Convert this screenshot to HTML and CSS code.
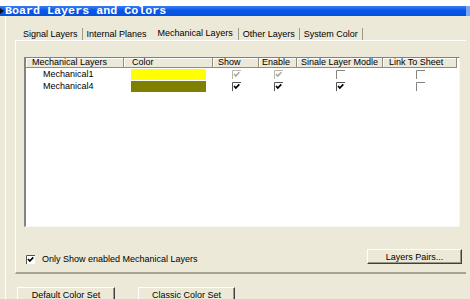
FILE: index.html
```html
<!DOCTYPE html>
<html>
<head>
<meta charset="utf-8">
<link rel="stylesheet" href="styles.css">
</head>
<body>
<div class="topgap"></div>
<div class="titlebar">
  <svg class="ticon" width="4" height="6" viewBox="0 0 4 6"><path d="M0 0L4 3L0 6Z" fill="#111"/></svg>
  <span class="title">Board Layers and Colors</span>
  <span class="tright"></span>
</div>
<div class="window">
  <div class="tabctl">
    <div class="tabs">
      <div class="tab">Signal Layers</div>
      <div class="tab before-active">Internal Planes</div>
      <div class="tab active">Mechanical Layers</div>
      <div class="tab">Other Layers</div>
      <div class="tab">System Color</div>
    </div>
    <div class="panel">
      <div class="list">
        <div class="grid">
          <div class="hd h1">Mechanical Layers</div>
          <div class="hd h2">Color</div>
          <div class="hd h3">Show</div>
          <div class="hd h4">Enable</div>
          <div class="hd h5">Sinale Layer Modle</div>
          <div class="hd h6">Link To Sheet</div>

          <div class="cell name">Mechanical1</div>
          <div class="cell sw"><span class="swatch yellow"></span></div>
          <div class="cell ck"><svg class="cb" width="9" height="9" viewBox="0 0 9 9"><path d="M0.5 9V0.5H9" fill="none" stroke="#b8b7ae"/><path d="M2 4L3.8 6L7.3 2.3" fill="none" stroke="#a8a79e" stroke-width="1.6"/></svg></div>
          <div class="cell ck"><svg class="cb" width="9" height="9" viewBox="0 0 9 9"><path d="M0.5 9V0.5H9" fill="none" stroke="#b8b7ae"/><path d="M2 4L3.8 6L7.3 2.3" fill="none" stroke="#a8a79e" stroke-width="1.6"/></svg></div>
          <div class="cell ck"><svg class="cb" width="9" height="9" viewBox="0 0 9 9"><path d="M0.5 9V0.5H9" fill="none" stroke="#85857d"/></svg></div>
          <div class="cell ck"><svg class="cb" width="9" height="9" viewBox="0 0 9 9"><path d="M0.5 9V0.5H9" fill="none" stroke="#85857d"/></svg></div>

          <div class="cell name">Mechanical4</div>
          <div class="cell sw"><span class="swatch olive"></span></div>
          <div class="cell ck"><svg class="cb" width="9" height="9" viewBox="0 0 9 9"><path d="M0.5 9V0.5H9" fill="none" stroke="#55554f"/><path d="M2 4L3.8 6L7.3 2.3" fill="none" stroke="#000" stroke-width="1.7"/></svg></div>
          <div class="cell ck"><svg class="cb" width="9" height="9" viewBox="0 0 9 9"><path d="M0.5 9V0.5H9" fill="none" stroke="#55554f"/><path d="M2 4L3.8 6L7.3 2.3" fill="none" stroke="#000" stroke-width="1.7"/></svg></div>
          <div class="cell ck"><svg class="cb" width="9" height="9" viewBox="0 0 9 9"><path d="M0.5 9V0.5H9" fill="none" stroke="#55554f"/><path d="M2 4L3.8 6L7.3 2.3" fill="none" stroke="#000" stroke-width="1.7"/></svg></div>
          <div class="cell ck"><svg class="cb" width="9" height="9" viewBox="0 0 9 9"><path d="M0.5 9V0.5H9" fill="none" stroke="#85857d"/></svg></div>
        </div>
      </div>
      <div class="footer-row">
        <div class="opt">
          <svg class="cb" width="9" height="9" viewBox="0 0 9 9"><rect x="0" y="0" width="9" height="9" fill="#fff"/><path d="M0.5 9V0.5H9" fill="none" stroke="#55554f"/><path d="M2 4L3.8 6L7.3 2.3" fill="none" stroke="#000" stroke-width="1.7"/></svg>
          <span>Only Show enabled Mechanical Layers</span>
        </div>
        <button class="btn pairs">Layers Pairs...</button>
      </div>
    </div>
  </div>
  <div class="bottom-buttons">
    <button class="btn big default">Default Color Set</button>
    <button class="btn big classic">Classic Color Set</button>
  </div>
</div>
</body>
</html>
```

FILE: styles.css
```css
* { box-sizing: border-box; }

body {
  margin: 0;
  width: 470px;
  height: 299px;
  overflow: hidden;
  background: #ECE9D8;
  font-family: "Liberation Sans", Arial, sans-serif;
  font-size: 9px;
  color: #000;
}

.topgap {
  height: 6px;
  background: #fff;
}

.titlebar {
  height: 10px;
  display: flex;
  align-items: center;
  background: linear-gradient(#3a7cf4, #0a57e6 45%, #0550e0);
}

.ticon { display: block; }

.title {
  font-family: "Liberation Mono", monospace;
  font-weight: bold;
  font-size: 11.7px;
  line-height: 10px;
  color: #fff;
  margin-left: 1px;
  white-space: nowrap;
}

.tright {
  margin-left: auto;
  width: 4px;
  height: 10px;
  background: #7aa6f5;
}

.window {
  margin-left: 5px;
  border-left: 1px solid #fff;
  height: 283px;
}

.tabctl {
  margin-left: 9px;
  padding-top: 12px;
  width: 451px;
}

.tabs {
  display: flex;
  padding-left: 4px;
  height: 12px;
}

.tab {
  padding: 0 4px;
  border-right: 1px solid #9c9a8c;
  line-height: 12px;
  white-space: nowrap;
}

.tab.before-active { border-right-color: transparent; }

.tab.active {
  padding: 0 5px 0 6px;
  line-height: 10px;
}

.panel {
  border-top: 1px solid #fff;
  border-left: 1px solid #fff;
  border-bottom: 2px solid #a5a391;
  padding: 16px 0 8px 8px;
}

.list {
  width: 436px;
  height: 170px;
  background: #fff;
  border-top: 1px solid #808080;
  border-left: 2px solid #85857d;
  border-right: 1px solid #f6f6f2;
  border-bottom: 1px solid #f6f6f2;
}

.grid {
  display: grid;
  grid-template-columns: 98px 89px 46px 38px 86px 74px;
  grid-auto-rows: 12px;
  grid-template-rows: 10px;
}

.hd {
  height: 10px;
  line-height: 9px;
  background: #ECE9D8;
  border-right: 1px solid #8f8d80;
  border-bottom: 1px solid #8f8d80;
  box-shadow: inset 1px 1px #fff;
  white-space: nowrap;
  overflow: hidden;
}

.h1 { padding-left: 6px; }
.h2 { padding-left: 8px; }
.h3 { padding-left: 5px; }
.h4 { padding-left: 3px; }
.h5 { padding-left: 4px; }
.h6 { padding-left: 6px; }

.cell {
  height: 12px;
  display: flex;
  align-items: center;
}

.name { padding-left: 17px; }

.sw {
  padding-left: 7px;
  align-items: flex-start;
}

.swatch {
  display: block;
  width: 75px;
  height: 11px;
  margin-top: 1px;
}

.yellow { background: #ffff00; }
.olive { background: #808000; }

.ck { justify-content: center; }

.cb { display: block; }

.footer-row {
  margin-top: 22px;
  height: 15px;
  display: flex;
  justify-content: space-between;
  align-items: flex-end;
}

.opt {
  display: flex;
  align-items: center;
  gap: 7px;
  margin-left: 2px;
  height: 10px;
  line-height: 10px;
  white-space: nowrap;
}

.btn {
  font-family: "Liberation Sans", Arial, sans-serif;
  font-size: 9px;
  color: #000;
  background: #ECE9D8;
  border: 1px solid;
  border-color: #fff #404040 #404040 #fff;
  box-shadow: inset -1px -1px #9a988a;
  padding: 0;
  margin: 0;
}

.pairs {
  width: 95px;
  height: 15px;
  line-height: 12px;
  margin-right: 4px;
}

.bottom-buttons {
  display: flex;
  gap: 23px;
  margin-top: 13px;
  padding-left: 11px;
}

.big {
  height: 22px;
  line-height: 10px;
  padding-top: 2px;
  display: flex;
  justify-content: center;
  align-items: flex-start;
}

.default { width: 98px; }
.classic { width: 97px; }
```
